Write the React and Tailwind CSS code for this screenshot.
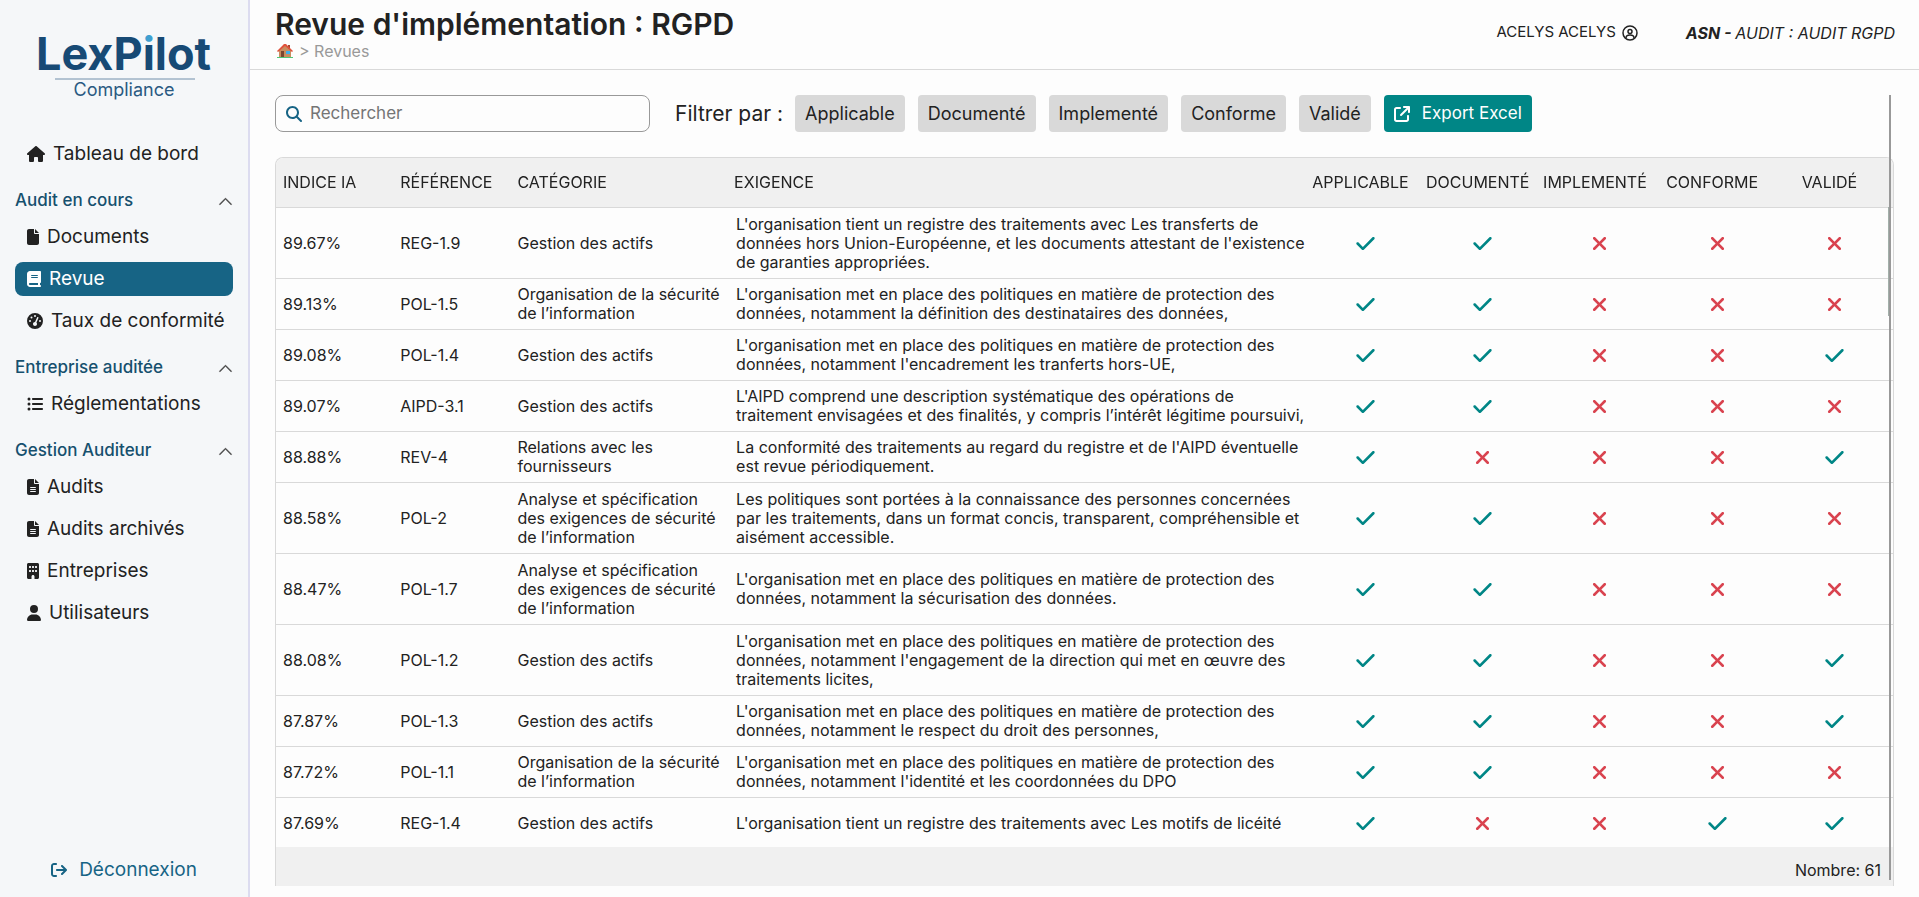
import {
  FaArrowRightFromBracket,
  FaArrowUpRightFromSquare,
  FaBook,
  FaBuilding,
  FaCheck,
  FaFile,
  FaFileLines,
  FaGaugeHigh,
  FaHouse,
  FaListUl,
  FaMagnifyingGlass,
  FaUser,
  FaXmark,
} from "react-icons/fa6";
import { BsChevronUp } from "react-icons/bs";

const menu = [
  {
    title: "Audit en cours",
    items: [
      { label: "Documents", icon: FaFile, size: "w-3" },
      { label: "Revue", icon: FaBook, size: "w-[14px]", active: true },
      { label: "Taux de conformité", icon: FaGaugeHigh, size: "w-4" },
    ],
  },
  {
    title: "Entreprise auditée",
    items: [{ label: "Réglementations", icon: FaListUl, size: "w-4" }],
  },
  {
    title: "Gestion Auditeur",
    items: [
      { label: "Audits", icon: FaFileLines, size: "w-3" },
      { label: "Audits archivés", icon: FaFileLines, size: "w-3" },
      { label: "Entreprises", icon: FaBuilding, size: "w-3" },
      { label: "Utilisateurs", icon: FaUser, size: "w-[14px]" },
    ],
  },
];

const filters = ["Applicable", "Documenté", "Implementé", "Conforme", "Validé"];

const statusColumns = ["Applicable", "Documenté", "Implementé", "Conforme", "Validé"];

// status : applicable, documenté, implementé, conforme, validé
const rows = [
  {
    indice: "89.67%",
    ref: "REG-1.9",
    categorie: "Gestion des actifs",
    exigence: [
      "L'organisation tient un registre des traitements avec Les transferts de",
      "données hors Union-Européenne, et les documents attestant de l'existence",
      "de garanties appropriées.",
    ],
    status: [1, 1, 0, 0, 0],
    tall: true,
  },
  {
    indice: "89.13%",
    ref: "POL-1.5",
    categorie: "Organisation de la sécurité de l’information",
    exigence: [
      "L'organisation met en place des politiques en matière de protection des",
      "données, notamment la définition des destinataires des données,",
    ],
    status: [1, 1, 0, 0, 0],
  },
  {
    indice: "89.08%",
    ref: "POL-1.4",
    categorie: "Gestion des actifs",
    exigence: [
      "L'organisation met en place des politiques en matière de protection des",
      "données, notamment l'encadrement les tranferts hors-UE,",
    ],
    status: [1, 1, 0, 0, 1],
  },
  {
    indice: "89.07%",
    ref: "AIPD-3.1",
    categorie: "Gestion des actifs",
    exigence: [
      "L'AIPD comprend une description systématique des opérations de",
      "traitement envisagées et des finalités, y compris l’intérêt légitime poursuivi,",
    ],
    status: [1, 1, 0, 0, 0],
  },
  {
    indice: "88.88%",
    ref: "REV-4",
    categorie: "Relations avec les fournisseurs",
    exigence: [
      "La conformité des traitements au regard du registre et de l'AIPD éventuelle",
      "est revue périodiquement.",
    ],
    status: [1, 0, 0, 0, 1],
  },
  {
    indice: "88.58%",
    ref: "POL-2",
    categorie: "Analyse et spécification des exigences de sécurité de l’information",
    exigence: [
      "Les politiques sont portées à la connaissance des personnes concernées",
      "par les traitements, dans un format concis, transparent, compréhensible et",
      "aisément accessible.",
    ],
    status: [1, 1, 0, 0, 0],
    tall: true,
  },
  {
    indice: "88.47%",
    ref: "POL-1.7",
    categorie: "Analyse et spécification des exigences de sécurité de l’information",
    exigence: [
      "L'organisation met en place des politiques en matière de protection des",
      "données, notamment la sécurisation des données.",
    ],
    status: [1, 1, 0, 0, 0],
    tall: true,
  },
  {
    indice: "88.08%",
    ref: "POL-1.2",
    categorie: "Gestion des actifs",
    exigence: [
      "L'organisation met en place des politiques en matière de protection des",
      "données, notamment l'engagement de la direction qui met en œuvre des",
      "traitements licites,",
    ],
    status: [1, 1, 0, 0, 1],
    tall: true,
  },
  {
    indice: "87.87%",
    ref: "POL-1.3",
    categorie: "Gestion des actifs",
    exigence: [
      "L'organisation met en place des politiques en matière de protection des",
      "données, notamment le respect du droit des personnes,",
    ],
    status: [1, 1, 0, 0, 1],
  },
  {
    indice: "87.72%",
    ref: "POL-1.1",
    categorie: "Organisation de la sécurité de l’information",
    exigence: [
      "L'organisation met en place des politiques en matière de protection des",
      "données, notamment l'identité et les coordonnées du DPO",
    ],
    status: [1, 1, 0, 0, 0],
  },
  {
    indice: "87.69%",
    ref: "REG-1.4",
    categorie: "Gestion des actifs",
    exigence: ["L'organisation tient un registre des traitements avec Les motifs de licéité"],
    status: [1, 0, 0, 1, 1],
  },
];

const Logo = () => (
  <svg viewBox="0 0 180 76" className="h-[76px] w-[180px] self-center" role="img" aria-label="LexPilot Compliance">
    <defs>
      {/* light dot, dark stem */}
      <linearGradient id="logo-i" gradientUnits="userSpaceOnUse" x1="0" y1="0" x2="0" y2="34">
        <stop offset="0.5" stopColor="#3f9fd0" />
        <stop offset="0.5" stopColor="#174a75" />
      </linearGradient>
    </defs>
    <text x="2" y="43" fontFamily="Inter, sans-serif" fontWeight="700" fontSize="45" fill="#174a75">
      LexP<tspan fill="url(#logo-i)">i</tspan>lot
    </text>
    <path d="M21 52H161" stroke="#174a75" strokeOpacity="0.6" />
    <text x="90" y="69" textAnchor="middle" fontFamily="Inter, sans-serif" fontSize="18" fill="#2a5a82">
      Compliance
    </text>
  </svg>
);

const HouseIcon = () => (
  <svg viewBox="0 0 16 16" className="h-4 w-4" aria-hidden="true">
    <path d="M2 7l6-5 6 5v7H2z" fill="#c98d5f" />
    <path d="M11 2h2v4h-2z" fill="#a5482f" />
    <path d="M0 8L7 1h2l7 7-1 1-7-6-7 6z" fill="#e0523c" />
    <path d="M4 8h3v6H4z" fill="#7a4630" />
    <path d="M9 8h4v3H9z" fill="#3fb0ea" />
    <path d="M0 14h16v1H0z" fill="#4cc778" />
  </svg>
);

const CircleUserIcon = () => (
  <svg viewBox="0 0 32 32" className="h-4 w-4" fill="none" stroke="currentColor" strokeWidth="3" aria-hidden="true">
    <circle cx="16" cy="16" r="14" />
    <circle cx="16" cy="13" r="4" />
    <path d="M8 26c0-4 3-6 8-6s8 2 8 6" />
  </svg>
);

const MenuItem = ({ label, icon: Icon, size, active }) => (
  <a
    href="#"
    className={
      active
        ? "flex h-[34px] items-center gap-2 rounded-lg bg-[#176485] pl-3 whitespace-nowrap text-white"
        : "flex h-[34px] items-center gap-2 rounded-lg pl-3 whitespace-nowrap text-[#222]"
    }
  >
    <Icon className={`h-4 shrink-0 ${size}`} />
    {label}
  </a>
);

const Sidebar = () => (
  <aside className="flex w-[250px] shrink-0 flex-col border-r-2 border-[#dcdcf0] bg-[#f5f7f9] px-[15px] pt-[27px] text-[19px]">
    <Logo />
    <nav className="mt-[34px]">
      <MenuItem label="Tableau de bord" icon={FaHouse} size="w-[18px]" />
      {menu.map((group) => (
        <section key={group.title} className="mt-[17px]">
          <button type="button" className="flex h-[26px] w-full items-center justify-between text-[17px] font-medium text-[#16506e]">
            {group.title}
            <BsChevronUp className="text-[15px] text-[#444]" strokeWidth="0.5" />
          </button>
          <div className="mt-[6px] flex flex-col gap-2">
            {group.items.map((item) => (
              <MenuItem key={item.label} {...item} />
            ))}
          </div>
        </section>
      ))}
    </nav>
    <a href="#" className="mt-auto mb-[10px] flex h-[34px] items-center justify-center gap-3 text-[#176485]">
      <FaArrowRightFromBracket className="text-base" />
      Déconnexion
    </a>
  </aside>
);

const PageHeader = () => (
  <header className="flex h-[70px] shrink-0 items-center justify-between border-b border-[#d9d9d9] pr-6 pl-[25px]">
    <div className="pb-[2px]">
      <h1 className="text-[30px] leading-[34px] font-semibold">Revue d'implémentation : RGPD</h1>
      <div className="flex items-center gap-[6px] pl-[2px] text-base leading-5 text-[#999]">
        <a href="#" aria-label="Accueil">
          <HouseIcon />
        </a>
        <span>&gt; Revues</span>
      </div>
    </div>
    <div className="flex items-center gap-12 pb-1">
      <a href="#" className="flex items-center gap-[6px] text-[15px]">
        ACELYS ACELYS
        <CircleUserIcon />
      </a>
      <p className="text-base italic">
        <b>ASN - </b>AUDIT : AUDIT RGPD
      </p>
    </div>
  </header>
);

const Toolbar = () => (
  <div className="flex items-center">
    <label className="flex h-[37px] w-[375px] items-center gap-2 rounded-lg border border-[#999] px-[10px]">
      <FaMagnifyingGlass className="shrink-0 text-base text-[#176485]" />
      <input
        type="search"
        aria-label="Rechercher"
        placeholder="Rechercher"
        className="w-full bg-transparent text-[17px] outline-none placeholder:text-[#757575]"
      />
    </label>
    <span className="ml-[25px] text-[21px]">Filtrer par :</span>
    <div className="ml-3 flex gap-[13px]">
      {filters.map((filter) => (
        <button key={filter} type="button" className="h-[37px] rounded bg-[#d9d9d9] px-[10px] text-lg">
          {filter}
        </button>
      ))}
      <button type="button" className="flex h-[37px] items-center gap-3 rounded bg-[#008686] px-[10px] text-[17px] text-white">
        <FaArrowUpRightFromSquare className="text-base" />
        Export Excel
      </button>
    </div>
  </div>
);

const Status = ({ ok }) =>
  ok ? (
    <FaCheck className="mx-auto text-[21px] text-[#008686]" aria-label="Oui" />
  ) : (
    <FaXmark className="mx-auto text-[21px] text-[#d9434f]" aria-label="Non" />
  );

const ReviewTable = () => (
  <div className="mt-[25px] flex min-h-0 flex-1 flex-col rounded-t-lg border border-b-0 border-[#d9d9d9]">
    <div className="min-h-0 flex-1 overflow-y-auto rounded-t-lg [scrollbar-width:none]">
      <table className="w-full table-fixed border-separate border-spacing-0 text-base leading-[19px]">
        <thead className="sticky top-0 bg-[#f0f0f0]">
          <tr className="h-[50px] text-left uppercase">
            <th className="w-[7.25%] border-b border-[#d9d9d9] pl-[7px] font-normal">Indice IA</th>
            <th className="w-[7.25%] border-b border-[#d9d9d9] pl-[7px] font-normal">Référence</th>
            <th className="w-[13.4%] border-b border-[#d9d9d9] pl-[7px] font-normal">Catégorie</th>
            <th className="border-b border-[#d9d9d9] pl-[7px] font-normal">Exigence</th>
            {statusColumns.map((column) => (
              <th key={column} className="w-[7.25%] border-b border-[#d9d9d9] pr-[10px] text-center font-normal">
                {column}
              </th>
            ))}
          </tr>
        </thead>
        <tbody>
          {rows.map((row) => (
            <tr key={row.ref} className={row.tall ? "h-[71px]" : "h-[51px]"}>
              <td className="border-b border-[#d9d9d9] py-[6px] pl-[7px]">{row.indice}</td>
              <td className="border-b border-[#d9d9d9] py-[6px] pl-[7px]">{row.ref}</td>
              <td className="border-b border-[#d9d9d9] py-[6px] pl-[7px]">{row.categorie}</td>
              <td className="border-b border-[#d9d9d9] py-[6px] pl-[9px]">
                {row.exigence.map((line) => (
                  <span key={line} className="block whitespace-nowrap">
                    {line}
                  </span>
                ))}
              </td>
              {row.status.map((ok, i) => (
                <td key={i} className="border-b border-[#d9d9d9]">
                  <Status ok={ok} />
                </td>
              ))}
            </tr>
          ))}
        </tbody>
      </table>
    </div>
    <footer className="flex h-[39px] shrink-0 items-center justify-end bg-[#f0f0f0] px-3 pt-[6px] text-base">
      Nombre: 61
    </footer>
  </div>
);

const App = () => {
  return (
    <div className="flex h-screen bg-[#fdfdfd] font-['Inter',sans-serif] text-[#222]">
      <Sidebar />
      <main className="flex min-w-0 flex-1 flex-col">
        <PageHeader />
        <div className="relative flex min-h-0 flex-1 flex-col px-[25px] pt-[25px] pb-[11px]">
          <Toolbar />
          <ReviewTable />
          {/* scroll thumbs: page, then table */}
          <div className="absolute top-[25px] right-[28px] bottom-[17px] w-[2px] bg-[#999]" />
          <div className="absolute top-[137px] right-[30px] h-[109px] w-px bg-[#a3b0aa]" />
        </div>
      </main>
    </div>
  );
};

export default App;
